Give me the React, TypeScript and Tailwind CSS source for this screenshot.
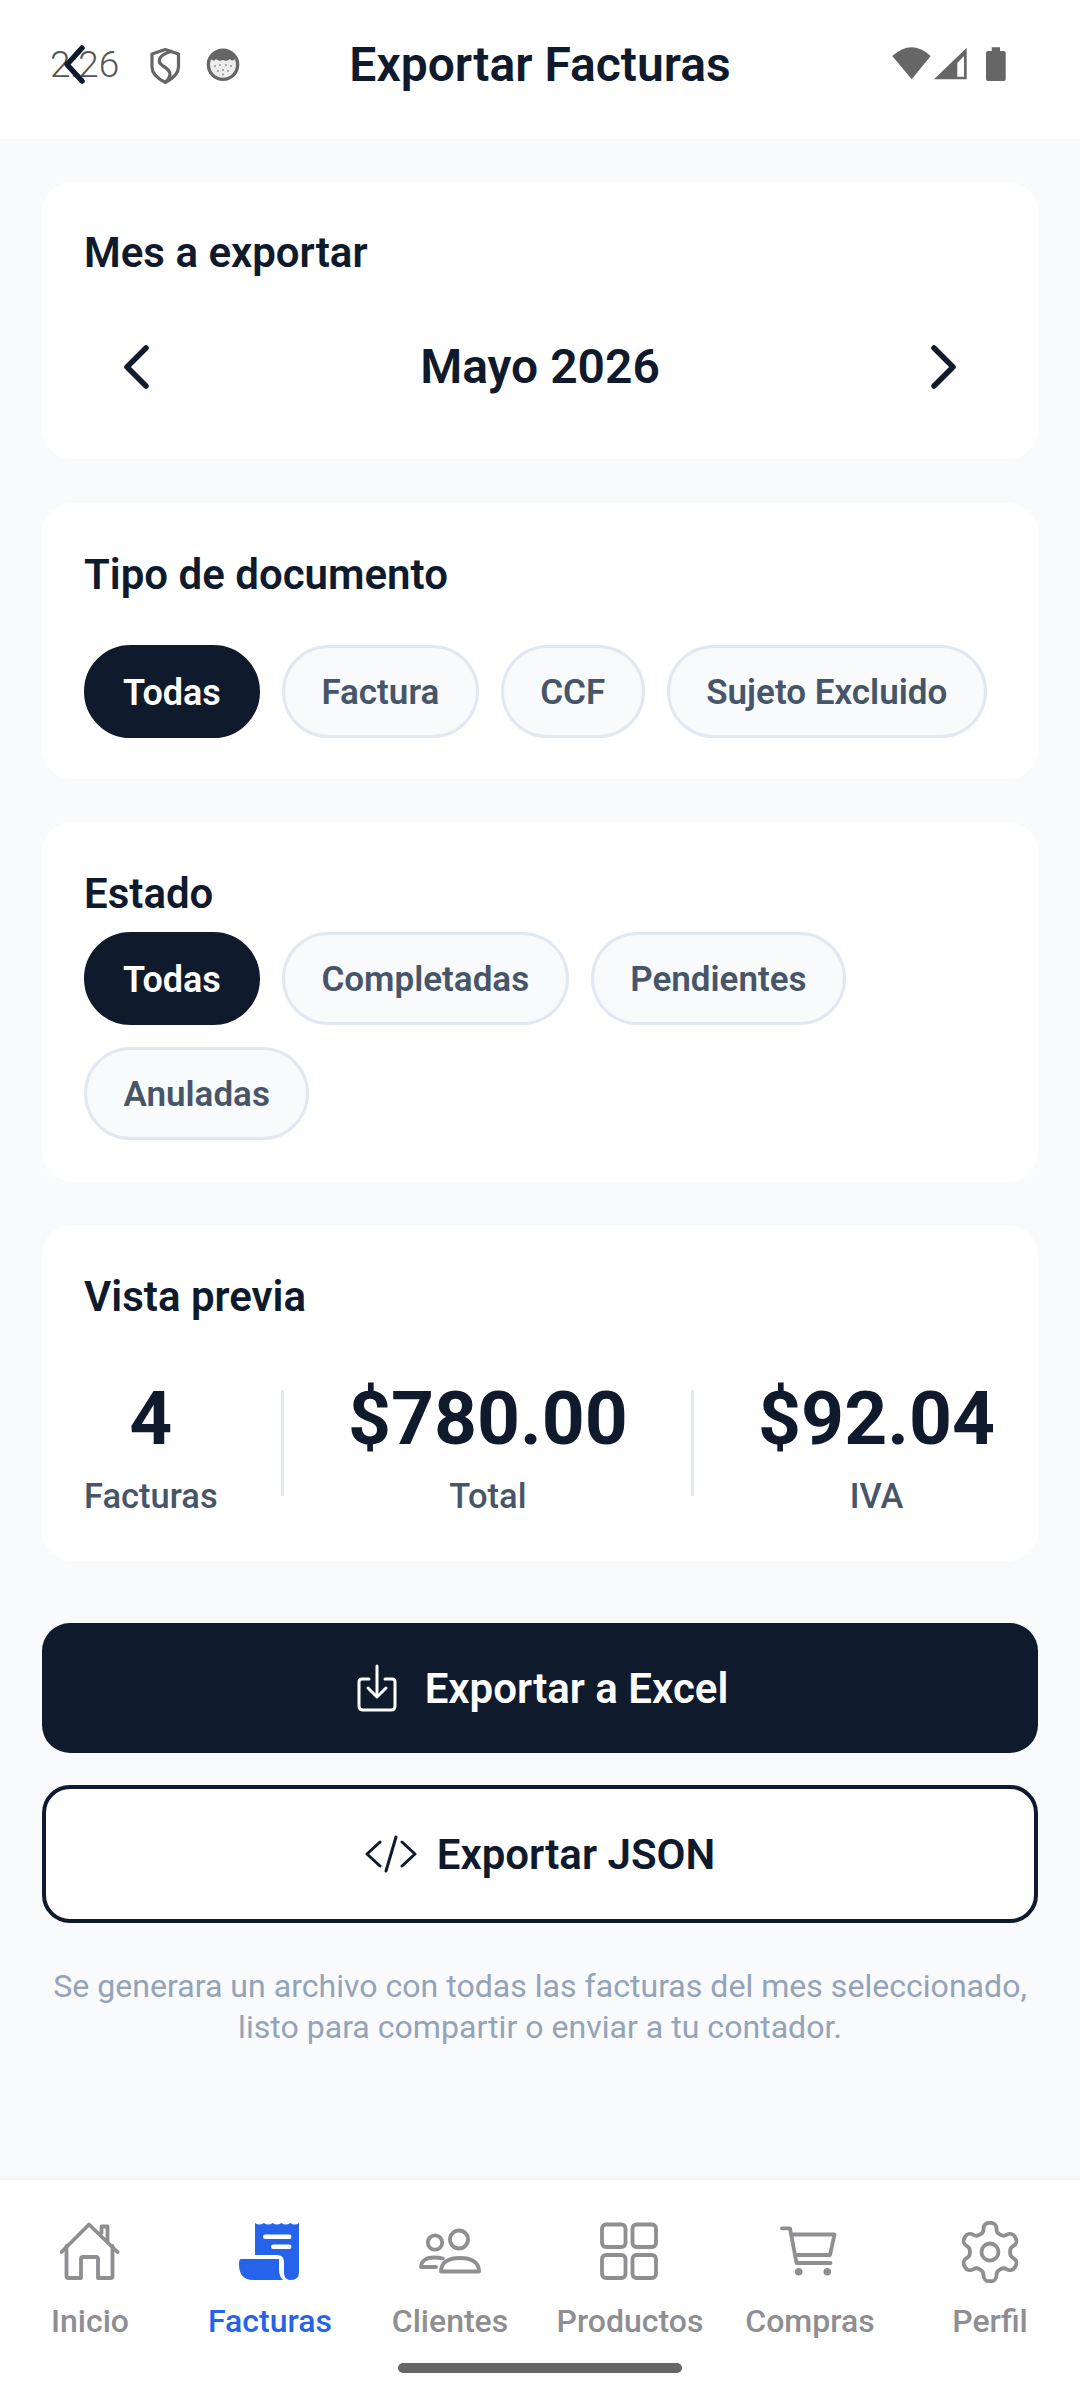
import React from "react";

const font = { fontFamily: "Roboto, 'Noto Sans', sans-serif" };

function Pill({ label, active }: { label: string; active?: boolean }) {
  return (
    <div
      className={
        "h-[93px] flex items-center rounded-full font-semibold border-[3px] " +
        (active ? "px-[36px] pt-[2px] text-[36px] bg-[#0f1a2c] border-[#0f1a2c] text-white" : "px-[36.5px] pt-[4px] text-[35px] bg-[#f8fafc] border-[#e2e8f0] text-[#475569]")
      }
    >
      {label}
    </div>
  );
}

function Card({ className, children }: { className?: string; children: React.ReactNode }) {
  return <section className={"bg-white rounded-[30px] mx-[42px] px-[42px] " + (className ?? "")}>{children}</section>;
}

function Stat({ value, label }: { value: string; label: string }) {
  return (
    <div className="flex flex-col items-center">
      <div className="text-[75px] leading-[88px] font-bold text-[#0f1a2c]">{value}</div>
      <div className="text-[34.5px] leading-[40px] mt-[14px] font-medium text-[#475569]">{label}</div>
    </div>
  );
}

const G = "#8e8e93";

function HomeIcon() {
  return (
    <svg width="60" height="60" viewBox="0 0 60 60" fill="none" stroke={G} strokeWidth="3.8" strokeLinejoin="round" strokeLinecap="round">
      <path d="M1.5 30 L29 2.5 L57.5 30" />
      <path d="M41.5 11 V4.5 H47.5 V19" />
      <path d="M6.5 24 V54 Q6.5 56 8.5 56 H21 V37 Q21 35 23 35 H36 Q38 35 38 37 V56 H50.5 Q52.5 56 52.5 54 V24" />
    </svg>
  );
}
function ReceiptIcon() {
  return (
    <svg width="62" height="60" viewBox="0 0 62 60">
      <path fill="#2563eb" d="M16 1 q4.4 3 8.8 0 q4.4 3 8.8 0 q4.4 3 8.8 0 q4.4 3 8.8 0 q4.4 3 8.8 0 V50 Q60 58 52 58 Q46 58 45 52 V40 Q45 33 38 33 H16 Z" />
      <path fill="#2563eb" d="M2 37 H40 V48 Q40 54 44 58 H14 Q0 58 0 42 Q0 37 2 37 Z" />
      <rect x="24" y="12.5" width="28.5" height="4.5" rx="2.25" fill="#fff" />
      <rect x="32" y="22.5" width="20.5" height="4.5" rx="2.25" fill="#fff" />
    </svg>
  );
}
function PeopleIcon() {
  return (
    <svg width="62" height="60" viewBox="0 0 62 60" fill="none" stroke={G} strokeWidth="3.8" strokeLinecap="round" strokeLinejoin="round">
      <circle cx="40" cy="17.5" r="9" />
      <circle cx="16" cy="20.5" r="7.2" />
      <path d="M22 49.5 C22 40 30 36 41 36 C52 36 60 40 60 49.5 Z" />
      <path d="M24 36.5 Q20 35.5 15 35.5 C7 35.5 2 39 2 45 H17" />
    </svg>
  );
}
function GridIcon() {
  return (
    <svg width="60" height="60" viewBox="0 0 60 60" fill="none" stroke={G} strokeWidth="3.8" strokeLinejoin="round">
      <rect x="2" y="2.5" width="23.5" height="22.5" rx="4" />
      <rect x="32.5" y="2.5" width="23.5" height="22.5" rx="4" />
      <rect x="2" y="33" width="23.5" height="23" rx="4" />
      <rect x="32.5" y="33" width="23.5" height="23" rx="4" />
    </svg>
  );
}
function CartIcon() {
  return (
    <svg width="60" height="60" viewBox="0 0 60 60" fill="none" stroke={G} strokeWidth="3.8" strokeLinecap="round" strokeLinejoin="round">
      <path d="M2 6.3 H10 L16.5 41 H50.5" />
      <path d="M11.5 12.5 H54.5 L50 33 H15" />
      <circle cx="18.7" cy="49.7" r="3.8" fill={G} stroke="none" />
      <circle cx="47.3" cy="49.7" r="3.8" fill={G} stroke="none" />
    </svg>
  );
}
function GearIcon() {
  return (
    <svg width="62" height="62" viewBox="1.6 1.4 20.8 21.2" fill="none" stroke={G} strokeWidth="1.3" strokeLinecap="round" strokeLinejoin="round">
      <path d="M12.22 2h-.44a2 2 0 0 0-2 2v.18a2 2 0 0 1-1 1.73l-.43.25a2 2 0 0 1-2 0l-.15-.08a2 2 0 0 0-2.73.73l-.22.38a2 2 0 0 0 .73 2.73l.15.1a2 2 0 0 1 1 1.72v.51a2 2 0 0 1-1 1.74l-.15.09a2 2 0 0 0-.73 2.73l.22.38a2 2 0 0 0 2.73.73l.15-.08a2 2 0 0 1 2 0l.43.25a2 2 0 0 1 1 1.73V20a2 2 0 0 0 2 2h.44a2 2 0 0 0 2-2v-.18a2 2 0 0 1 1-1.73l.43-.25a2 2 0 0 1 2 0l.15.08a2 2 0 0 0 2.73-.73l.22-.39a2 2 0 0 0-.73-2.73l-.15-.08a2 2 0 0 1-1-1.74v-.5a2 2 0 0 1 1-1.74l.15-.09a2 2 0 0 0 .73-2.73l-.22-.38a2 2 0 0 0-2.73-.73l-.15.08a2 2 0 0 1-2 0l-.43-.25a2 2 0 0 1-1-1.73V4a2 2 0 0 0-2-2z" />
      <circle cx="12" cy="12" r="2.9" />
    </svg>
  );
}

function NavItem({ icon, label, active }: { icon: React.ReactNode; label: string; active?: boolean }) {
  return (
    <div className="flex-1 flex flex-col items-center">
      <div className="h-[60px] flex items-center justify-center">{icon}</div>
      <div className={"mt-[19px] text-[32px] leading-[40px] font-medium " + (active ? "text-[#2563eb]" : "text-[#8e8e93]")}>{label}</div>
    </div>
  );
}

export default function App() {
  return (
    <div style={font} className="relative w-[1080px] h-[2400px] bg-[#f8fafc] flex flex-col overflow-hidden">
      <header className="relative h-[139px] bg-white flex items-center justify-center pb-[10px]">
        <div className="absolute left-[50px] top-[44px] text-[37px] leading-[42px] font-light text-[#555555]">2:26</div>
        <svg className="absolute left-[148px] top-[46px]" width="34" height="40" viewBox="0 0 34 40" fill="none" stroke="#666" strokeWidth="3.2" strokeLinejoin="round" strokeLinecap="round">
          <path d="M17.3 3.5 L30.5 8 V21 C30.5 28 24 33 17.3 36.5 C10.5 33 4 28 4 21 V8 Z" />
          <path d="M23 5.5 C11 9 8 15 15 20 C22 24 25 29 18 35.5" />
        </svg>
        <svg className="absolute left-[205px] top-[47px]" width="36" height="36" viewBox="0 0 36 36">
          <circle cx="18" cy="17.7" r="16.3" fill="#666" />
          <circle cx="18" cy="17.7" r="13" fill="#ececec" />
          <path d="M6 12 A13 13 0 0 1 30 12 Q27 15 25 12 Q22 15 18 13 Q14 15 11 12 Q9 15 6 12 Z" fill="#666" />
          <circle cx="10" cy="19" r="0.9" fill="#888" />
          <circle cx="15" cy="18" r="0.9" fill="#888" />
          <circle cx="21" cy="18" r="0.9" fill="#888" />
          <circle cx="26" cy="19" r="0.9" fill="#888" />
          <circle cx="13" cy="24" r="0.9" fill="#888" />
          <circle cx="18" cy="23" r="0.9" fill="#888" />
          <circle cx="23" cy="24" r="0.9" fill="#888" />
          <circle cx="18" cy="27.5" r="0.9" fill="#888" />
        </svg>
        <svg className="absolute left-[60px] top-[43px]" width="30" height="44" viewBox="0 0 30 44" fill="none" stroke="#0f1a2c" strokeWidth="5.5" strokeLinecap="round" strokeLinejoin="round">
          <path d="M22 5 L7 21.5 L22 38" />
        </svg>
        <h1 className="text-[48px] leading-[54px] font-semibold text-[#0f1a2c]">Exportar Facturas</h1>
        <svg className="absolute left-[890px] top-[46px]" width="80" height="36" viewBox="0 0 80 36">
          <path d="M2.3 10 Q21.7 -7.4 40.7 10 L21.7 33.3 Z" fill="#666" />
          <path d="M76.7 1.7 V33.3 H44 Z" fill="#666" />
          <path d="M74 10 V30.7 H67.3 V17 Z" fill="#fff" />
        </svg>
        <svg className="absolute left-[985px] top-[46px]" width="22" height="36" viewBox="0 0 22 36">
          <path d="M6.7 1.3 H15 V5 H18.7 Q20.7 5 20.7 7 V33 Q20.7 35 18.7 35 H3 Q1 35 1 33 V7 Q1 5 3 5 H6.7 Z" fill="#666" />
        </svg>
      </header>

      <main className="flex-1 flex flex-col pt-[43px]">
        <Card className="h-[277px] pt-[44px]">
          <h2 className="text-[42px] leading-[54px] font-semibold text-[#0f1a2c]">Mes a exportar</h2>
          <div className="mt-[60px] flex items-center justify-between px-[38px]">
            <svg width="30" height="44" viewBox="0 0 30 44" fill="none" stroke="#0f1a2c" strokeWidth="5.5" strokeLinecap="round" strokeLinejoin="round"><path d="M24 3 L5 22 L24 41" /></svg>
            <div className="text-[48px] leading-[54px] font-semibold text-[#0f1a2c]">Mayo 2026</div>
            <svg width="30" height="44" viewBox="0 0 30 44" fill="none" stroke="#0f1a2c" strokeWidth="5.5" strokeLinecap="round" strokeLinejoin="round"><path d="M6 3 L25 22 L6 41" /></svg>
          </div>
        </Card>

        <Card className="mt-[44px] h-[276px] pt-[45px]">
          <h2 className="text-[42px] leading-[54px] font-semibold text-[#0f1a2c]">Tipo de documento</h2>
          <div className="mt-[43px] flex gap-[22px]">
            <Pill label="Todas" active />
            <Pill label="Factura" />
            <Pill label="CCF" />
            <Pill label="Sujeto Excluido" />
          </div>
        </Card>

        <Card className="mt-[43px] h-[360px] pt-[45px]">
          <h2 className="text-[42px] leading-[54px] font-semibold text-[#0f1a2c]">Estado</h2>
          <div className="mt-[11px] flex flex-wrap gap-[22px]">
            <Pill label="Todas" active />
            <Pill label="Completadas" />
            <Pill label="Pendientes" />
            <Pill label="Anuladas" />
          </div>
        </Card>

        <Card className="mt-[43px] h-[336px] pt-[45px]">
          <h2 className="text-[42px] leading-[54px] font-semibold text-[#0f1a2c]">Vista previa</h2>
          <div className="mt-[50px] pr-[1px] flex items-start justify-between">
            <Stat value="4" label="Facturas" />
            <div className="mt-[16px] w-[3px] h-[106px] bg-[#e2e8f0]" />
            <Stat value="$780.00" label="Total" />
            <div className="mt-[16px] w-[3px] h-[106px] bg-[#e2e8f0]" />
            <Stat value="$92.04" label="IVA" />
          </div>
        </Card>

        <button className="mt-[62px] mx-[42px] h-[130px] rounded-[28px] bg-[#0f1a2c] flex items-center justify-center gap-[28px] text-white text-[42px] font-semibold">
          <svg width="45" height="48" viewBox="-5 0 45 48" fill="none" stroke="#fff" strokeWidth="3" strokeLinecap="round" strokeLinejoin="round">
            <path d="M12 15 H5 Q2 15 2 18 V42 Q2 46 6 46 H34 Q38 46 38 42 V18 Q38 15 35 15 H28" />
            <path d="M20 2 V32" />
            <path d="M11 24 L20 33 L29 24" />
          </svg>
          Exportar a Excel
        </button>
        <button className="mt-[32px] mx-[42px] h-[138px] rounded-[28px] bg-white border-[4px] border-[#0f1a2c] flex items-center justify-center gap-[20px] text-[#0f1a2c] text-[42px] font-semibold">
          <svg width="52" height="38" viewBox="0 0 52 38" fill="none" stroke="#0f1a2c" strokeWidth="3" strokeLinecap="round" strokeLinejoin="round">
            <path d="M15 7 L2 19 L15 31" />
            <path d="M37 7 L50 19 L37 31" />
            <path d="M31 2 L21 36" />
          </svg>
          Exportar JSON
        </button>

        <p className="mt-[43px] text-center text-[32.1px] leading-[41px] text-[#94a3b8]">
          Se generara un archivo con todas las facturas del mes seleccionado,
          <br />
          listo para compartir o enviar a tu contador.
        </p>
      </main>

      <nav className="relative h-[220px] bg-white shadow-[0_-1px_4px_rgba(0,0,0,0.05)] pt-[42px] flex items-start">
        <NavItem icon={<HomeIcon />} label="Inicio" />
        <NavItem icon={<ReceiptIcon />} label="Facturas" active />
        <NavItem icon={<PeopleIcon />} label="Clientes" />
        <NavItem icon={<GridIcon />} label="Productos" />
        <NavItem icon={<CartIcon />} label="Compras" />
        <NavItem icon={<GearIcon />} label="Perfil" />
        <div className="absolute left-[398px] top-[183px] w-[284px] h-[10px] rounded-full bg-[#666666]" />
      </nav>
    </div>
  );
}
